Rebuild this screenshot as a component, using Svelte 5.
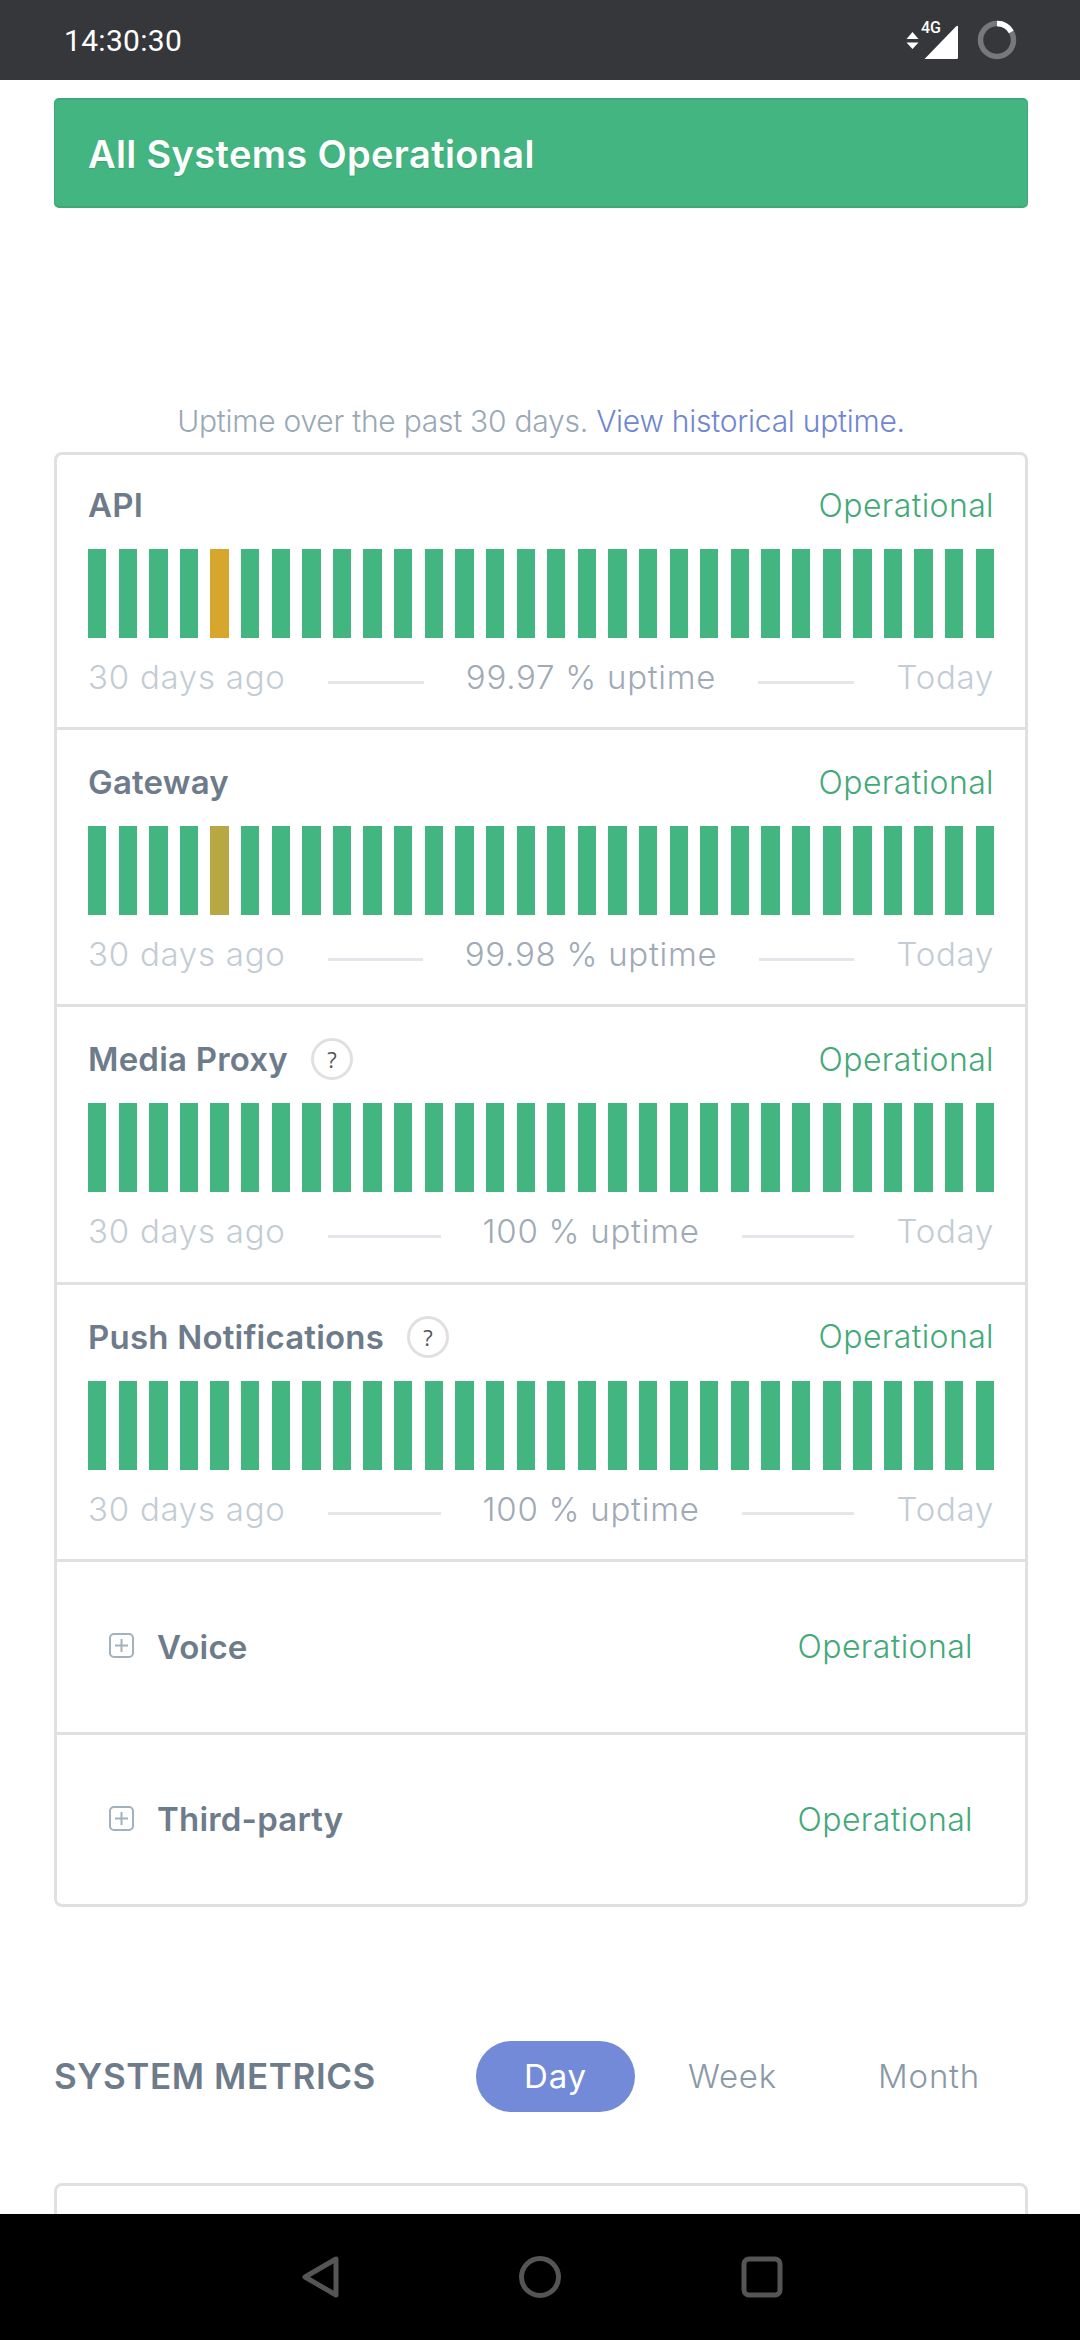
<script>
  const green = '#43b581';
  const bars = (special) => Array.from({ length: 30 }, (_, i) => (i === 4 && special ? special : green));
  const services = [
    { name: 'API', pct: '99.97', bars: bars('#d6a72c') },
    { name: 'Gateway', pct: '99.98', bars: bars('#b7a843') },
    { name: 'Media Proxy', pct: '100', help: true, bars: bars() },
    { name: 'Push Notifications', pct: '100', help: true, bars: bars() }
  ];
  const groups = ['Voice', 'Third-party'];
</script>

<div class="screen">
  <header class="status">
    <span class="time">14:30:30</span>
    <div class="status-icons">
      <svg width="13" height="17" viewBox="0 0 13 17" class="arrows"><path d="M6.500 0l6 7H.5zM6.500 17l6-6.500H.5z" fill="#fff"/></svg>
      <div class="signal">
        <span class="net">4G</span>
        <svg width="36" height="36" viewBox="0 0 36 36"><path d="M2 34.500L33 2.500Q35 1 35 3V33.500Q35 35 33.500 35H2.500Q0.800 35 2 34.500Z" fill="#fff"/></svg>
      </div>
      <svg width="40" height="40" viewBox="0 0 40 40" class="ring">
        <circle cx="20" cy="20" r="16.500" fill="none" stroke="#77787b" stroke-width="5.500"/>
        <path d="M20 3.500A16.500 16.500 0 0 1 34.300 11.750" fill="none" stroke="#fff" stroke-width="5.500"/>
      </svg>
    </div>
  </header>

  <main class="page">
    <div class="banner">All Systems Operational</div>

    <p class="intro">Uptime over the past 30 days. <a href="#history">View historical uptime.</a></p>

    <section class="card">
      {#each services as s}
        <div class="row">
          <div class="row-head">
            <span class="name">{s.name}</span>
            {#if s.help}<span class="help">?</span>{/if}
            <span class="state">Operational</span>
          </div>
          <div class="bars">
            {#each s.bars as c}
              <span class="bar" style="background:{c}"></span>
            {/each}
          </div>
          <div class="legend">
            <span>30 days ago</span>
            <i class="rule"></i>
            <span class="uptime">{s.pct} % uptime</span>
            <i class="rule"></i>
            <span>Today</span>
          </div>
        </div>
      {/each}
      {#each groups as g}
        <div class="group">
          <svg class="plus" width="25" height="25" viewBox="0 0 25 25">
            <rect x="1" y="1" width="23" height="23" rx="4" fill="none" stroke="#a3b1bd" stroke-width="2"/>
            <path d="M12.500 6v13M6 12.500h13" stroke="#a3b1bd" stroke-width="2"/>
          </svg>
          <span class="name">{g}</span>
          <span class="state">Operational</span>
        </div>
      {/each}
    </section>

    <div class="metrics">
      <h2>SYSTEM METRICS</h2>
      <div class="tabs">
        <span class="tab active">Day</span>
        <span class="tab">Week</span>
        <span class="tab">Month</span>
      </div>
    </div>

    <section class="card next"></section>
  </main>

  <nav class="nav">
    <svg width="44" height="46" viewBox="0 0 44 46"><path d="M40 5V41L9 23Z" fill="none" stroke="#555" stroke-width="5" stroke-linejoin="round"/></svg>
    <svg width="44" height="46" viewBox="0 0 44 46"><circle cx="22" cy="23" r="18.500" fill="none" stroke="#555" stroke-width="5"/></svg>
    <svg width="44" height="46" viewBox="0 0 44 46"><rect x="4" y="5" width="36" height="36" rx="5" fill="none" stroke="#555" stroke-width="5"/></svg>
  </nav>
</div>

<style>
  :global(body) { margin: 0; background: #fff; }
  .screen {
    width: 1080px; height: 2340px; display: flex; flex-direction: column; overflow: hidden;
    font-family: Inter, "Open Sans", sans-serif; background: #fff;
  }
  .status {
    height: 80px; flex: none; background: #36373b; display: flex; align-items: center;
    justify-content: space-between; padding: 0 63px 0 64px; box-sizing: border-box;
  }
  .time { font: 400 30px Roboto, sans-serif; color: #fff; letter-spacing: 0.3px; }
  .status-icons { display: flex; align-items: center; }
  .arrows { margin-right: 4px; }
  .signal { position: relative; width: 36px; height: 36px; margin-top: 3px; }
  .signal svg { display: block; }
  .net { position: absolute; left: -2px; top: -4px; font: 500 16px Roboto, sans-serif; color: #fff; line-height: 16px; }
  .ring { margin-left: 18px; }

  .page { flex: 1; min-height: 0; overflow: hidden; padding: 18px 52px 0 54px; }
  .banner {
    height: 110px; box-sizing: border-box; background: #43b581; border: 1px solid #3fa778; border-top-width: 2px; border-bottom-width: 2px;
    border-radius: 5px; color: #fff; font-size: 38px; font-weight: 600; padding: 2px 0 0 33px; letter-spacing: 0.35px;
    display: flex; align-items: center; text-shadow: 0 1px 1px rgba(0,0,0,.12);
  }
  .intro { margin: 0; padding-top: 189px; height: 55px; line-height: 48px; text-align: center; font-size: 30px; color: #9aa8b5; font-weight: 300; letter-spacing: -0.25px; }
  .intro a { color: #6f86d0; text-decoration: none; }
  .card { border: 3px solid #e0e0e0; border-radius: 8px; overflow: hidden; }
  .row { height: 277.330px; box-sizing: border-box; padding: 29px 31px 0; border-bottom: 3px solid #e0e0e0; }
  .row:first-child { height: 275px; padding-top: 27px; }
  .row-head { display: flex; align-items: center; height: 46px; }
  .name { font-size: 33px; font-weight: 600; color: #6e7b8a; letter-spacing: 0.2px; }
  .state { margin-left: auto; font-size: 32px; font-weight: 300; color: #43a979; letter-spacing: 0.4px; }
  .help {
    width: 42px; height: 42px; box-sizing: border-box; border: 3px solid #e0e0e0; border-radius: 50%;
    margin-left: 23px; display: flex; align-items: center; justify-content: center;
    font: 400 22px "Open Sans", sans-serif; color: #555;
  }
  .bars { display: flex; justify-content: space-between; height: 89px; margin-top: 21px; }
  .bar { width: 18.300px; }
  .legend { display: flex; align-items: center; font-size: 33px; font-weight: 300; letter-spacing: 0.75px; color: #c3ccd4; margin-top: 17px; height: 44px; }
  .rule { flex: 1; height: 3px; background: #e3e6ea; margin: 10px 42px 0; }
  .uptime { color: #9faab6; }
  .group {
    height: 173px; box-sizing: border-box; display: flex; align-items: center; padding: 0 52px 0 52px;
    border-bottom: 3px solid #e0e0e0;
  }
  .group:last-child { border-bottom: 0; height: 169px; }
  .plus { margin: -2px 23px 0 0; }

  .metrics { display: flex; align-items: center; height: 71px; margin-top: 134px; }
  h2 { margin: 0; font-size: 35px; font-weight: 600; color: #6e7b8a; letter-spacing: 0.6px; }
  .tabs { display: flex; gap: 5px; margin-left: auto; font-size: 33px; font-weight: 300; letter-spacing: 0.8px; color: #8a99a6; }
  .tab { height: 71px; display: flex; align-items: center; padding: 0 48px; }
  .active { border-radius: 36px; background: #738ad8; color: #fff; font-weight: 400; }
  .next { height: 300px; margin-top: 71px; }

  .nav {
    height: 126px; flex: none; background: #000; display: flex; align-items: center; justify-content: center; gap: 178px;
    box-sizing: border-box;
  }
</style>
